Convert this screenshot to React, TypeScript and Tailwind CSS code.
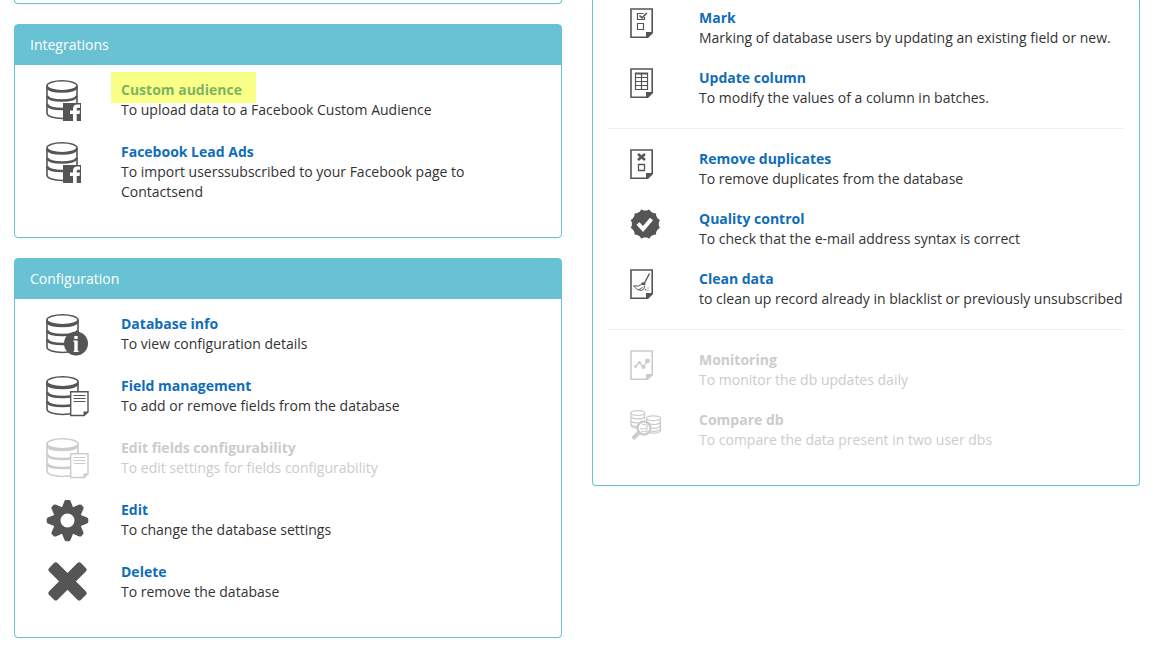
import React from 'react';

interface Item {
  title: string;
  description: string;
  icon: React.ReactNode;
  disabled?: boolean;
  highlighted?: boolean;
}

/* Large icons (left column) */

function DatabaseShape({ width = 32, bands = [7, 16, 24.5] }: { width?: number; bands?: number[] }) {
  const left = 1;
  const right = width - 1;
  const mid = width / 2;
  return (
    <g fill="none" stroke="currentColor">
      <ellipse cx={mid} cy="5.8" rx={mid - 1} ry="5" strokeWidth="1.6" />
      <path
        d={`M${left} 5.8 V33 C${left} 36.500 ${mid - 8} 38.500 ${mid} 38.500 C${mid + 8} 38.500 ${right} 36.500 ${right} 33 V5.8`}
        strokeWidth="1.6"
      />
      {bands.map((y) => (
        <path
          key={y}
          d={`M${left} ${y} C${left + 3} ${y + 6} ${right - 3} ${y + 6} ${right} ${y}`}
          strokeWidth="2.6"
        />
      ))}
    </g>
  );
}

function LargeIcon({ children }: { children: React.ReactNode }) {
  return (
    <svg className="h-[42px] w-[43px] shrink-0" viewBox="0 0 43 42" aria-hidden="true">
      {children}
    </svg>
  );
}

function FacebookDatabaseIcon() {
  return (
    <LargeIcon>
      <DatabaseShape />
      <path d="M17 23h18v18H17z" fill="currentColor" />
      <path d="M27 41v-7h-3v-3.500h3v-1.700c0-2.800 1.600-4.300 4.300-4.300H34v3.200h-1.700c-1.100 0-1.600.5-1.600 1.500v1.300H34l-.5 3.500h-2.800v7z" fill="#fff" />
    </LargeIcon>
  );
}

function InfoDatabaseIcon() {
  return (
    <LargeIcon>
      <DatabaseShape width={33} bands={[7.5, 16.5, 25.5]} />
      <circle cx="30" cy="29.500" r="12" fill="currentColor" />
      <path d="M28.300 22h3.400v3h-3.400zM27.300 26.500h4.400v10.200h1V38h-5v-1.300h.6v-8.900h-1z" fill="#fff" />
    </LargeIcon>
  );
}

function FieldDatabaseIcon() {
  return (
    <LargeIcon>
      <DatabaseShape width={33} bands={[7.5, 16.5, 25.5]} />
      <path d="M24.700 15.700h17.300v20.300l-4 3.500H24.700z" fill="#fff" stroke="currentColor" strokeWidth="1.400" />
      <path d="M37.500 35.500h5l-5 5z" fill="currentColor" />
      <path d="M27.500 19.500h12M27.500 22.500h12M27.500 25.500h12" stroke="currentColor" strokeWidth="1" />
    </LargeIcon>
  );
}

function GearIcon() {
  return (
    <LargeIcon>
      <g fill="currentColor">
        {[0, 45, 90, 135, 180, 225, 270, 315].map((angle) => (
          <path
            key={angle}
            d="M15.500 8.500 18.300 1.500Q18.900-.3 20.200-.3h2.600Q24.100-.3 24.700 1.500L27.500 8.500z"
            transform={`rotate(${angle} 21.500 20.500)`}
          />
        ))}
        <path
          fillRule="evenodd"
          d="M21.500 6.500a14 14 0 1 0 0 28a14 14 0 1 0 0-28zM21.500 13.500a7 7 0 1 1 0 14a7 7 0 1 1 0-14z"
        />
      </g>
    </LargeIcon>
  );
}

function DeleteIcon() {
  return (
    <LargeIcon>
      <g fill="currentColor">
        <rect x="-1" y="13.500" width="45" height="11.800" rx="2.500" transform="rotate(45 21.500 19.400)" />
        <rect x="-1" y="13.500" width="45" height="11.800" rx="2.500" transform="rotate(-45 21.500 19.400)" />
      </g>
    </LargeIcon>
  );
}

/* Small icons (right column) */

function SmallIcon({ children }: { children: React.ReactNode }) {
  return (
    <svg className="h-[31px] w-[31px] shrink-0" viewBox="0 0 31 31" aria-hidden="true">
      {children}
    </svg>
  );
}

function PageIcon({ children }: { children: React.ReactNode }) {
  return (
    <SmallIcon>
      <path d="M1 1h21.200v23.500L17 29.200H1z" fill="none" stroke="currentColor" strokeWidth="1.600" />
      <path d="M16 24h7v1l-5 5h-2z" fill="currentColor" />
      {children}
    </SmallIcon>
  );
}

function MarkIcon() {
  return (
    <PageIcon>
      <path d="M13.500 5.500h-6v6h7V9M7.500 15.500h6v6h-6z" fill="none" stroke="currentColor" strokeWidth="1.200" />
      <path d="M9.500 7.500l2.500 2.300L16.800 5" fill="none" stroke="currentColor" strokeWidth="1.600" />
    </PageIcon>
  );
}

function TableIcon() {
  return (
    <PageIcon>
      <path d="M5.500 5.500h12v16h-12zM5.500 9.500h12M5.500 13.500h12M5.500 17.500h12M11.500 6v15" fill="none" stroke="currentColor" strokeWidth="1.200" />
      <path d="M4.900 4.500h13.200v2H4.900z" fill="currentColor" />
    </PageIcon>
  );
}

function DuplicateIcon() {
  return (
    <PageIcon>
      <path d="M8 5l7 6M15 5l-7 6" stroke="currentColor" strokeWidth="2.600" />
      <path d="M8.500 15.500h6v6h-6z" fill="none" stroke="currentColor" strokeWidth="1.300" />
    </PageIcon>
  );
}

function QualityIcon() {
  return (
    <SmallIcon>
      <g fill="currentColor">
        <circle cx="15.300" cy="15" r="13.500" />
        {[0, 30, 60].map((angle) => (
          <rect key={angle} x="4.500" y="4.200" width="21.600" height="21.600" rx="1" transform={`rotate(${angle} 15.300 15)`} />
        ))}
      </g>
      <path d="M8 14.500l5 5.500L21.500 10" fill="none" stroke="#fff" strokeWidth="4" />
    </SmallIcon>
  );
}

function CleanIcon() {
  return (
    <PageIcon>
      <path d="M19.500 4.500L14.500 14" stroke="currentColor" strokeWidth="1.400" />
      <path d="M11.500 14q2-1.500 4 .5l-.5 2-4-1z" fill="currentColor" />
      <path d="M11.500 15.500Q9 18 3.500 16.800Q6.500 21.500 11.500 21.500Q15 20 14.800 17M9 20.500q2.500-.5 3.500-2.500" fill="none" stroke="currentColor" strokeWidth="1" />
      <path d="M15 20h1.300v1.300H15zM17.500 18.500h1v1h-1zM17.500 21h1v1h-1z" fill="currentColor" />
    </PageIcon>
  );
}

function MonitoringIcon() {
  return (
    <PageIcon>
      <path d="M5.500 16.500L9.500 12.500L13.500 17L17.500 11" fill="none" stroke="currentColor" strokeWidth="1.300" />
      <g fill="currentColor">
        <circle cx="5.500" cy="16.500" r="1.400" />
        <circle cx="9.500" cy="12.500" r="1.600" />
        <circle cx="13.500" cy="17" r="2" />
        <circle cx="17.500" cy="11" r="2.400" />
      </g>
    </PageIcon>
  );
}

function CompareIcon() {
  return (
    <SmallIcon>
      <g fill="none" stroke="currentColor" strokeWidth="1.200">
        <ellipse cx="7.800" cy="3" rx="6.900" ry="2.400" />
        <path d="M.9 3v12c0 1.800 3 2.800 6.500 2.800M14.700 3v6M.9 6.500c1 3.200 12.800 3.200 13.800 0M.9 10.500c1 3 10.500 3.200 12.800.8M.9 14c1 2 4 2.400 6.500 2.400" />
        <ellipse cx="23.500" cy="8.200" rx="6.900" ry="2.400" />
        <path d="M16.600 8.200v3M30.400 8.200v12c0 3.300-9 3.800-12.500 1.800M30.400 11.700c-1 3-7.500 3.200-10.500 2.300M30.400 15.700c-1 2.800-6.500 3-9.500 2.500M30.400 19c-1 2-6.500 2.800-10.500 2" />
      </g>
      <circle cx="14" cy="18" r="6.500" fill="none" stroke="currentColor" strokeWidth="2.400" />
      <path d="M12 14.500q3.500-1 5.500 2M17 13v10M10 18.500q4 1.500 7-.5M11 21.500q3 .8 6-.5" fill="none" stroke="currentColor" strokeWidth="1" />
      <path d="M8.500 23l-4.500 4.500" stroke="currentColor" strokeWidth="4" strokeLinecap="round" />
    </SmallIcon>
  );
}

const integrations: Item[] = [
  {
    title: 'Custom audience',
    description: 'To upload data to a Facebook Custom Audience',
    icon: <FacebookDatabaseIcon />,
    highlighted: true,
  },
  {
    title: 'Facebook Lead Ads',
    description: 'To import userssubscribed to your Facebook page to Contactsend',
    icon: <FacebookDatabaseIcon />,
  },
];

const configuration: Item[] = [
  { title: 'Database info', description: 'To view configuration details', icon: <InfoDatabaseIcon /> },
  { title: 'Field management', description: 'To add or remove fields from the database', icon: <FieldDatabaseIcon /> },
  {
    title: 'Edit fields configurability',
    description: 'To edit settings for fields configurability',
    icon: <FieldDatabaseIcon />,
    disabled: true,
  },
  { title: 'Edit', description: 'To change the database settings', icon: <GearIcon /> },
  { title: 'Delete', description: 'To remove the database', icon: <DeleteIcon /> },
];

const toolGroups: Item[][] = [
  [
    { title: 'Mark', description: 'Marking of database users by updating an existing field or new.', icon: <MarkIcon /> },
    { title: 'Update column', description: 'To modify the values of a column in batches.', icon: <TableIcon /> },
  ],
  [
    { title: 'Remove duplicates', description: 'To remove duplicates from the database', icon: <DuplicateIcon /> },
    { title: 'Quality control', description: 'To check that the e-mail address syntax is correct', icon: <QualityIcon /> },
    {
      title: 'Clean data',
      description: 'to clean up record already in blacklist or previously unsubscribed',
      icon: <CleanIcon />,
    },
  ],
  [
    { title: 'Monitoring', description: 'To monitor the db updates daily', icon: <MonitoringIcon />, disabled: true },
    {
      title: 'Compare db',
      description: 'To compare the data present in two user dbs',
      icon: <CompareIcon />,
      disabled: true,
    },
  ],
];

function ItemRow({ item }: { item: Item }) {
  return (
    <li className={`flex gap-4 ${item.disabled ? 'text-[#cccccc]' : 'text-[#333333]'}`}>
      <div className={`flex h-10 w-[75px] shrink-0 justify-center ${item.disabled ? '' : 'text-[#555555]'}`}>
        {item.icon}
      </div>
      <div className="min-w-0 flex-1">
        <h3 className="font-bold">
          {item.disabled ? (
            <span>{item.title}</span>
          ) : (
            <a href="#" className="relative text-[#0f6db8] hover:underline">
              {item.title}
              {item.highlighted && (
                <span className="pointer-events-none absolute -top-2 -left-[10px] h-[31px] w-[145px] bg-[#f5ff05]/48" />
              )}
            </a>
          )}
        </h3>
        <p>{item.description}</p>
      </div>
    </li>
  );
}

function Panel({ title, items }: { title: string; items: Item[] }) {
  return (
    <section className="rounded border border-[#68c2d4] bg-white shadow-xs">
      <h2 className="bg-[#68c2d4] px-[15px] py-[10px] text-white">{title}</h2>
      <ul className="flex flex-col gap-[22px] px-[15px] pt-[15px] pb-[35px]">
        {items.map((item) => (
          <ItemRow key={item.title} item={item} />
        ))}
      </ul>
    </section>
  );
}

export default function App() {
  return (
    <main className="grid grid-cols-2 items-start gap-[30px] bg-white pr-[13px] pl-[14px] font-['Open_Sans',sans-serif] text-[14px] leading-5">
      <div className="flex flex-col gap-5">
        <div className="h-1 rounded-b border-x border-b border-[#68c2d4] shadow-xs" />
        <Panel title="Integrations" items={integrations} />
        <Panel title="Configuration" items={configuration} />
      </div>

      <section className="flex flex-col gap-5 rounded-b border-x border-b border-[#68c2d4] px-[15px] pt-2 pb-[35px] shadow-xs">
        {toolGroups.map((group, index) => (
          <React.Fragment key={group[0].title}>
            {index > 0 && <hr className="border-[#eeeeee]" />}
            <ul className="flex flex-col gap-5">
              {group.map((item) => (
                <ItemRow key={item.title} item={item} />
              ))}
            </ul>
          </React.Fragment>
        ))}
      </section>
    </main>
  );
}
